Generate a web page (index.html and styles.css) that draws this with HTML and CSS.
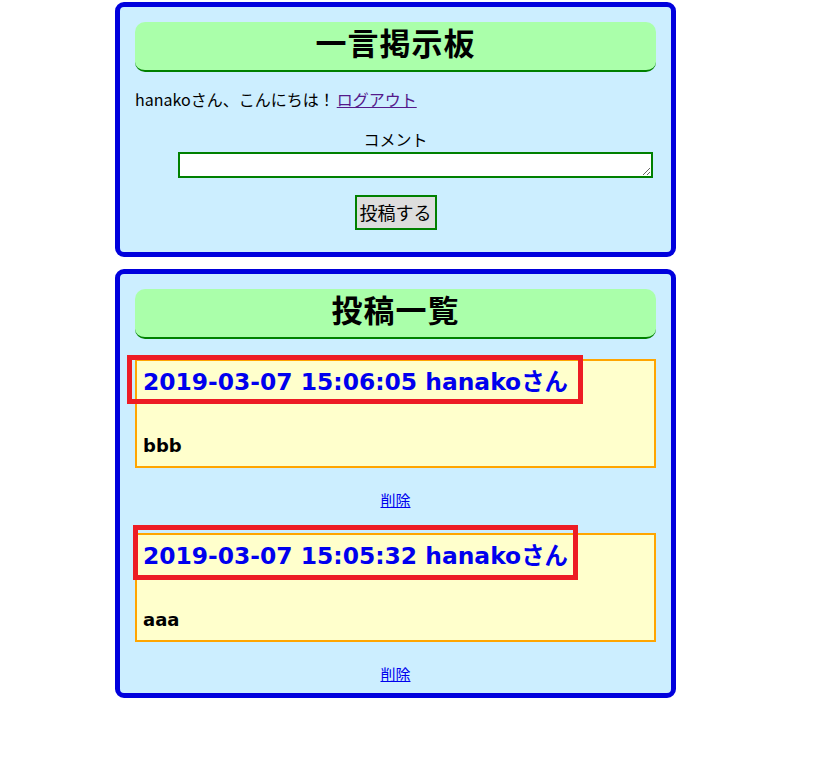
FILE: index.html
```html
<!DOCTYPE html>
<html lang="ja">
<head>
<meta charset="utf-8">
<title>一言掲示板</title>
<link rel="stylesheet" href="styles.css">
</head>
<body>
<div class="wrap">
  <section class="panel">
    <h1 class="title">一言掲示板</h1>
    <p class="greeting">hanakoさん、こんにちは！<a class="logout" href="#">ログアウト</a></p>
    <form class="form">
      <label class="label" for="comment">コメント</label>
      <textarea class="textarea" id="comment"></textarea>
      <button class="submit" type="button">投稿する</button>
    </form>
  </section>

  <section class="panel panel-list">
    <h1 class="title">投稿一覧</h1>

    <article class="entry">
      <div class="post">
        <h2 class="post-head">2019-03-07 15:06:05 hanakoさん</h2>
        <p class="post-body">bbb</p>
        <span class="mark mark-1"></span>
      </div>
      <p class="del"><a href="#">削除</a></p>
    </article>

    <article class="entry">
      <div class="post">
        <h2 class="post-head">2019-03-07 15:05:32 hanakoさん</h2>
        <p class="post-body">aaa</p>
        <span class="mark mark-2"></span>
      </div>
      <p class="del"><a href="#">削除</a></p>
    </article>
  </section>
</div>
</body>
</html>
```

FILE: styles.css
```css
html, body {
  margin: 0;
  padding: 0;
  background: #ffffff;
}

body {
  font-family: "Noto Sans CJK JP", "DejaVu Sans", sans-serif;
  font-size: 16px;
  color: #000;
}

.wrap {
  width: 561px;
  padding: 2px 0 0 115px;
  display: flex;
  flex-direction: column;
  gap: 12px;
}

.panel {
  background: #cceeff;
  border: 5px solid #0000dd;
  border-radius: 9px;
  padding: 15px 15px 15px 15px;
  width: 521px;
}

.title {
  margin: 0;
  height: 48px;
  background: #aaffaa;
  border-bottom: 2px solid #008000;
  border-radius: 10px;
  text-align: center;
  font-family: "Noto Sans CJK JP", sans-serif;
  font-weight: 700;
  font-size: 31px;
  line-height: 40px;
  letter-spacing: 1px;
}

.greeting {
  margin: 17px 0 0 0;
  line-height: 20px;
  font-size: 16px;
}

.logout {
  color: #551a8b;
  text-decoration: underline;
  margin-left: 2px;
}

.form {
  display: flex;
  flex-direction: column;
  align-items: center;
  margin: 0;
}

.label {
  margin-top: 20px;
  line-height: 20px;
}

.textarea {
  box-sizing: border-box;
  align-self: flex-start;
  margin: 3px 0 0 43px;
  width: 475px;
  height: 26px;
  border: 2px solid #008000;
  background: #fff;
  padding: 1px 2px;
  font-family: inherit;
  font-size: 14px;
  resize: both;
}

.submit {
  box-sizing: border-box;
  margin: 17px 0 7px 0;
  height: 35px;
  padding: 0 3px;
  background: #dddddd;
  border: 2px solid #008000;
  border-radius: 0;
  font-family: "Noto Sans CJK JP", sans-serif;
  font-size: 18px;
  color: #000;
  line-height: 27px;
}

.panel-list {
  padding-bottom: 9px;
}

.entry {
  margin-top: 20px;
}

.entry + .entry {
  margin-top: 23px;
}

.post {
  position: relative;
  background: #ffffcc;
  border: 2px solid #ffa500;
  padding: 6px 6px 8px 6px;
}

.post-head {
  margin: 0;
  font-family: "DejaVu Sans", "Noto Sans CJK JP", sans-serif;
  font-weight: 700;
  font-size: 23.4px;
  line-height: 30px;
  color: #0000ee;
  white-space: nowrap;
}

.post-body {
  margin: 37px 0 0 0;
  font-family: "DejaVu Sans", "Noto Sans CJK JP", sans-serif;
  font-weight: 700;
  font-size: 18px;
  line-height: 24px;
}

.mark {
  position: absolute;
  box-sizing: border-box;
  border: 5px solid #ed1c24;
  pointer-events: none;
}

.mark-1 {
  left: -10px;
  top: -6px;
  width: 456px;
  height: 49px;
}

.mark-2 {
  left: -4px;
  top: -10px;
  width: 445px;
  height: 55px;
}

.del {
  margin: 22px 0 0 0;
  text-align: center;
  font-size: 15px;
  line-height: 20px;
}

.del a {
  color: #0000ee;
  text-decoration: underline;
}
```
